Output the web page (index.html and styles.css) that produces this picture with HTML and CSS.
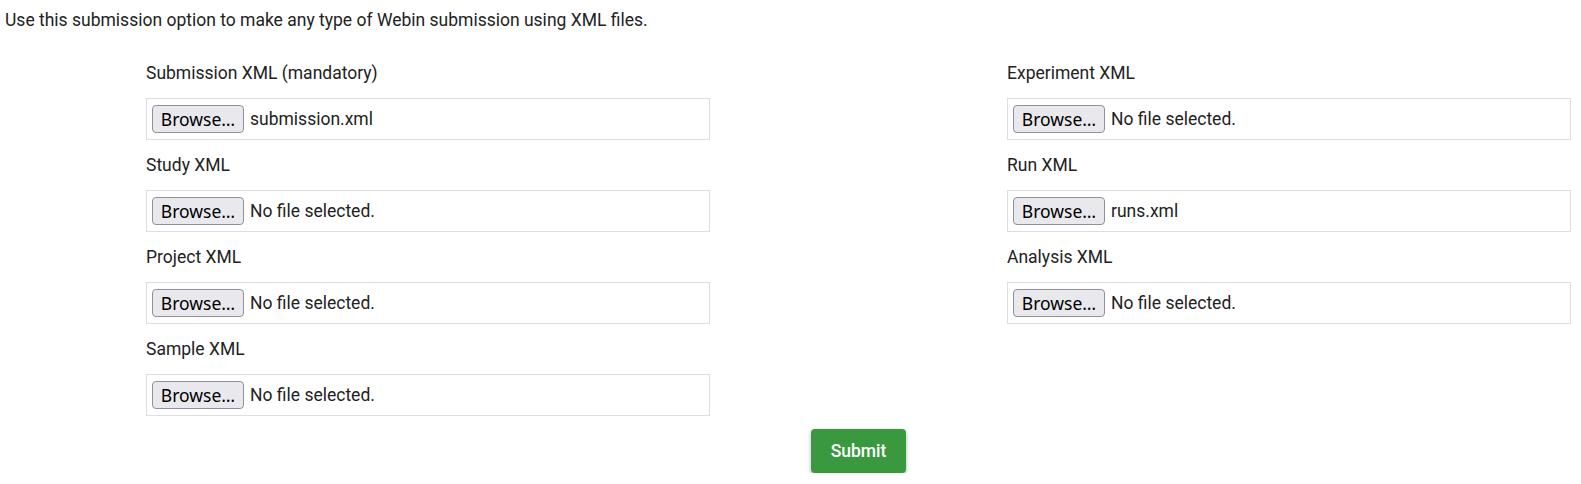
FILE: index.html
```html
<!DOCTYPE html>
<html>
<head>
<meta charset="utf-8">
<link rel="stylesheet" href="styles.css">
</head>
<body>
<p class="intro">Use this submission option to make any type of Webin submission using XML files.</p>
<form class="form">
  <div class="cols">
    <div class="col">
      <div class="field">
        <label class="label">Submission XML (mandatory)</label>
        <div class="file"><span class="browse">Browse…</span><span class="fname">submission.xml</span></div>
      </div>
      <div class="field">
        <label class="label">Study XML</label>
        <div class="file"><span class="browse">Browse…</span><span class="fname">No file selected.</span></div>
      </div>
      <div class="field">
        <label class="label">Project XML</label>
        <div class="file"><span class="browse">Browse…</span><span class="fname">No file selected.</span></div>
      </div>
      <div class="field">
        <label class="label">Sample XML</label>
        <div class="file"><span class="browse">Browse…</span><span class="fname">No file selected.</span></div>
      </div>
    </div>
    <div class="col">
      <div class="field">
        <label class="label">Experiment XML</label>
        <div class="file"><span class="browse">Browse…</span><span class="fname">No file selected.</span></div>
      </div>
      <div class="field">
        <label class="label">Run XML</label>
        <div class="file"><span class="browse">Browse…</span><span class="fname">runs.xml</span></div>
      </div>
      <div class="field">
        <label class="label">Analysis XML</label>
        <div class="file"><span class="browse">Browse…</span><span class="fname">No file selected.</span></div>
      </div>
    </div>
  </div>
  <div class="actions">
    <button type="button" class="submit">Submit</button>
  </div>
</form>
</body>
</html>
```
FILE: styles.css
```css
html, body {
  margin: 0;
  padding: 0;
  background: #fff;
}
body {
  font-family: Roboto, "Liberation Sans", sans-serif;
  font-size: 17.5px;
  line-height: 24px;
  color: #222;
  padding: 8px 5px 0 5px;
}
.intro {
  margin: 0;
}
.form {
  margin: 29px 0 0 141px;
  width: 1425px;
}
.cols {
  display: grid;
  grid-template-columns: 564px 564px;
  justify-content: space-between;
}
.col {
  display: flex;
  flex-direction: column;
}
.field {
  display: flex;
  flex-direction: column;
  margin-bottom: 13px;
}
.label {
  display: block;
  margin-bottom: 13px;
}
.file {
  display: flex;
  align-items: center;
  height: 42px;
  box-sizing: border-box;
  border: 1px solid #dedede;
  padding: 0 5px;
}
.browse {
  display: inline-flex;
  align-items: center;
  justify-content: center;
  box-sizing: border-box;
  width: 92px;
  height: 28px;
  background: #e9e9ed;
  border: 1px solid #8f8f9d;
  border-radius: 4px;
  font-family: "Noto Sans", "DejaVu Sans", sans-serif;
  font-size: 17.5px;
  color: #000;
  white-space: nowrap;
}
.fname {
  margin-left: 6px;
}
.actions {
  display: flex;
  justify-content: center;
  margin-top: 0;
}
.submit {
  width: 95px;
  height: 44px;
  background: #3a993f;
  color: #fff;
  border: none;
  border-radius: 4px;
  font-family: Roboto, "Liberation Sans", sans-serif;
  font-size: 17.5px;
  font-weight: 500;
  box-shadow: 0 2px 4px rgba(0,0,0,0.3);
}
```
